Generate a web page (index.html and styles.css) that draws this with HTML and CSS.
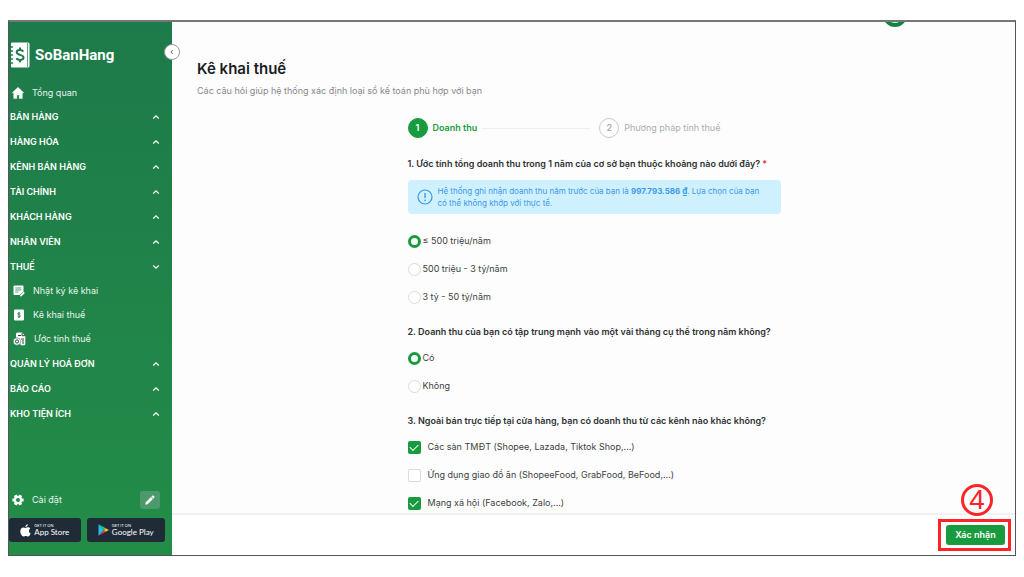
FILE: index.html
```html
<!DOCTYPE html>
<html lang="vi">
	<head>
		<meta charset="utf-8">
		<meta name="viewport" content="width=device-width, initial-scale=1">
		<title>Kê khai thuế</title>
		<link rel="stylesheet" href="styles.css">
	</head>
	<body>
		<svg class="defs" width="0" height="0" aria-hidden="true">
			<symbol id="chevron" viewBox="0 0 8 8"><path d="M1.5 5.2L4 2.8l2.500 2.400" fill="none" stroke="currentColor" stroke-width="1.2" stroke-linecap="round"/></symbol>
		</svg>
		<div class="frame">
			<aside class="sidebar">
				<button class="collapse" type="button" aria-label="Thu gọn">
					<svg width="6" height="6" viewBox="0 0 6 6"><path d="M3.8 1L1.9 3l1.9 2" fill="none" stroke="currentColor"/></svg>
				</button>
				<div class="brand">
					<svg width="20" height="26" viewBox="0 0 20 26">
						<path d="M1 1.5Q1 .5 2 .5H18Q19.500 .5 19.500 2V24Q19.500 25.500 18 25.500H2Q1 25.500 1 24.500Z" fill="#fff"/>
						<path d="M0 5h2.500M0 9h2.500M0 13h2.500M0 17h2.500M0 21h2.500" stroke="#1d7a4a" stroke-width="1.500" stroke-linecap="round"/>
						<path d="M17.500 1v24" stroke="#1d7a4a" stroke-width=".7"/>
						<path d="M13.300 9.600C12.500 7.800 6.700 7.200 6.700 10.300c0 3.300 6.800 1.900 6.800 5.300 0 3.100-6.100 2.800-7 .6M10 5.500v2.200M10 18v2.300" fill="none" stroke="#1d7a4a" stroke-width="2"/>
					</svg>
					<span>SoBanHang</span>
				</div>
				<nav class="menu">
					<a class="menu-item home" href="#">
						<svg width="12" height="12" viewBox="0 0 12 12"><path d="M6 .3L.2 5.800h1.500V11.500h3.100V8h2.400v3.500h3.100V5.800h1.500Z" fill="#fff" stroke="#fff" stroke-width=".4" stroke-linejoin="round"/></svg>
						Tổng quan
					</a>
					<button class="menu-head" type="button">BÁN HÀNG<svg><use href="#chevron"/></svg></button>
					<button class="menu-head" type="button">HÀNG HÓA<svg><use href="#chevron"/></svg></button>
					<button class="menu-head" type="button">KÊNH BÁN HÀNG<svg><use href="#chevron"/></svg></button>
					<button class="menu-head" type="button">TÀI CHÍNH<svg><use href="#chevron"/></svg></button>
					<button class="menu-head" type="button">KHÁCH HÀNG<svg><use href="#chevron"/></svg></button>
					<button class="menu-head" type="button">NHÂN VIÊN<svg><use href="#chevron"/></svg></button>
					<button class="menu-head open" type="button">THUẾ<svg><use href="#chevron"/></svg></button>
					<a class="menu-item" href="#">
						<svg width="12" height="12" viewBox="0 0 12 12">
							<path d="M1.500 0.500h8q1 0 1 1v5L6.500 10h-5q-1 0-1-1V1.500q0-1 1-1Z" fill="#fff"/>
							<path d="M2.300 3h6M2.300 5h6M2.300 7h3" stroke="#217f49" stroke-width=".8"/>
							<path d="M7 11.500l.3-1.600L10.600 6.800l1.200 1.200-3.300 3.200Z" fill="#fff"/>
						</svg>
						Nhật ký kê khai
					</a>
					<a class="menu-item" href="#">
						<svg width="12" height="12" viewBox="0 0 12 12">
							<rect x="1" y=".5" width="10" height="11" rx="1.200" fill="#fff"/>
							<path d="M7.400 4.700C7 3.600 4.600 3.700 4.700 4.900c.1 1.300 2.800.8 2.700 2.200-.1 1.300-2.400 1.200-2.800.2M6 3v6" fill="none" stroke="#217f49" stroke-width=".9"/>
						</svg>
						Kê khai thuế
					</a>
					<a class="menu-item" href="#">
						<svg width="13" height="14" viewBox="0 0 13 14">
							<path d="M3 5V2q0-1.500 1.500-1.500H9L12.300 4V12q0 1.300-1.300 1.300H8" fill="#fff"/>
							<path d="M5 3.500h3M9 1v2.700h3M8 7h3M9 9h2M9 11h2" fill="none" stroke="#34424a"/>
							<circle cx="4" cy="9.500" r="3.700" fill="#fff" stroke="#217f49" stroke-width=".6"/>
							<circle cx="4" cy="9.500" r="1.600" fill="none" stroke="#34424a"/>
						</svg>
						Ước tính thuế
					</a>
					<button class="menu-head" type="button">QUẢN LÝ HOÁ ĐƠN<svg><use href="#chevron"/></svg></button>
					<button class="menu-head" type="button">BÁO CÁO<svg><use href="#chevron"/></svg></button>
					<button class="menu-head" type="button">KHO TIỆN ÍCH<svg><use href="#chevron"/></svg></button>
				</nav>
				<div class="settings">
					<a class="menu-item home" href="#">
						<svg width="12" height="12" viewBox="0 0 12 12">
							<circle cx="6" cy="6" r="4.300" fill="#fff"/>
							<path d="M3.200 1.300L8.800 10.700M8.800 1.300L3.200 10.700M.4 6h11.200" stroke="#fff" stroke-width="3.200"/>
							<circle cx="6" cy="6" r="2" fill="#228a48"/>
						</svg>
						Cài đặt
					</a>
					<button class="edit" type="button" aria-label="Chỉnh sửa">
						<svg width="10" height="10" viewBox="0 0 10 10"><path d="M.5 9.500l.4-2.200L6 2.200 7.800 4 2.700 9.100ZM6.600 1.600l.8-.8q.5-.4 1 0l.8.8q.4.5 0 1l-.8.8Z" fill="#fff" stroke="#fff" stroke-width=".3"/></svg>
					</button>
				</div>
				<div class="stores">
					<a class="store" href="#">
						<svg width="11" height="13" viewBox="0 0 11 13"><path d="M7.800.3c.1 1.300-1 2.700-2.400 2.800C5.200 1.800 6.500.4 7.800.3ZM5.600 3.900c.7 0 1.400-.7 2.500-.6.900 0 1.700.4 2.200 1.200-2 1.200-1.700 4 .4 4.800C10.200 10.700 9.200 12.500 8 12.500c-.9 0-1.200-.5-2.200-.5s-1.400.5-2.200.5C2 12.500.3 9.600.3 7.300.3 4.800 1.800 3.400 3.300 3.400c1 0 1.700.5 2.300.5Z" fill="#fff"/></svg>
						<span class="store-text"><small>GET IT ON</small>App Store</span>
					</a>
					<a class="store" href="#">
						<svg width="11" height="12" viewBox="0 0 11 12">
							<path d="M.5.300L6 6 .5 11.700Z" fill="#1fc0f0"/>
							<path d="M.5.300L7.800 4.200 6 6Z" fill="#22cf72"/>
							<path d="M.5 11.700L7.800 7.800 6 6Z" fill="#f0384c"/>
							<path d="M7.800 4.200L10.900 6 7.800 7.800 6 6Z" fill="#fcc419"/>
						</svg>
						<span class="store-text"><small>GET IT ON</small>Google Play</span>
					</a>
				</div>
			</aside>

			<main class="main">
				<span class="avatar"></span>
				<div class="content">
					<h1>Kê khai thuế</h1>
					<p class="lead">Các câu hỏi giúp hệ thống xác định loại sổ kế toán phù hợp với bạn</p>

					<form class="form" id="tax-form">
						<ol class="steps">
							<li class="step active"><span class="num">1</span>Doanh thu</li>
							<li class="line"></li>
							<li class="step"><span class="num">2</span>Phương pháp tính thuế</li>
						</ol>

						<fieldset>
							<legend>1. Ước tính tổng doanh thu trong 1 năm của cơ sở bạn thuộc khoảng nào dưới đây? <span class="required">*</span></legend>
							<div class="notice">
								<svg width="16" height="16" viewBox="0 0 16 16"><circle cx="8" cy="8" r="7" fill="none" stroke="#3b97ec" stroke-width="1.200"/><path d="M8 4v5" stroke="#3b97ec" stroke-width="1.400"/><circle cx="8" cy="11.300" r=".9" fill="#3b97ec"/></svg>
								<p>Hệ thống ghi nhận doanh thu năm trước của bạn là <b>997.793.586 ₫</b>. Lựa chọn của bạn có thể không khớp với thực tế.</p>
							</div>
							<label class="option"><input type="radio" name="revenue" checked>≤ 500 triệu/năm</label>
							<label class="option"><input type="radio" name="revenue">500 triệu - 3 tỷ/năm</label>
							<label class="option"><input type="radio" name="revenue">3 tỷ - 50 tỷ/năm</label>
						</fieldset>

						<fieldset>
							<legend>2. Doanh thu của bạn có tập trung mạnh vào một vài tháng cụ thể trong năm không?</legend>
							<label class="option"><input type="radio" name="season" checked>Có</label>
							<label class="option"><input type="radio" name="season">Không</label>
						</fieldset>

						<fieldset>
							<legend>3. Ngoài bán trực tiếp tại cửa hàng, bạn có doanh thu từ các kênh nào khác không?</legend>
							<label class="option check"><input type="checkbox" checked>Các sàn TMĐT (Shopee, Lazada, Tiktok Shop,...)</label>
							<label class="option check"><input type="checkbox">Ứng dụng giao đồ ăn (ShopeeFood, GrabFood, BeFood,...)</label>
							<label class="option check"><input type="checkbox" checked>Mạng xã hội (Facebook, Zalo,...)</label>
						</fieldset>
					</form>
				</div>
				<footer class="footer">
					<div class="highlight">
						<span class="marker">4</span>
						<button class="submit" type="submit" form="tax-form">Xác nhận</button>
					</div>
				</footer>
			</main>
		</div>
	</body>
</html>
```
FILE: styles.css
```css
* {
	box-sizing: border-box;
}

body {
	margin: 0;
	padding: 20px 8px 21px;
	background: #fff;
	color: #3c3f42;
	font-family: Inter, "Noto Sans", sans-serif;
	font-size: 9px;
	line-height: 12px;
}

button, input {
	font: inherit;
	margin: 0;
}

button {
	padding: 0;
	border: 0;
	background: none;
	cursor: pointer;
}

a {
	color: inherit;
	text-decoration: none;
}

svg {
	flex: none;
}

.defs {
	position: absolute;
}

.frame {
	display: flex;
	height: calc(100vh - 41px);
	border: 1px solid #555;
	border-top: 2px solid #777;
}

/* Sidebar */

.sidebar {
	position: relative;
	display: flex;
	flex-direction: column;
	flex: none;
	width: 163px;
	background: linear-gradient(#1d7a4a, #238d48);
	color: #fff;
}

.collapse {
	position: absolute;
	top: 22px;
	right: -8px;
	z-index: 1;
	display: flex;
	align-items: center;
	justify-content: center;
	width: 16px;
	height: 16px;
	border: 1px solid #999;
	border-radius: 50%;
	background: #fff;
	color: #666;
}

.brand {
	display: flex;
	align-items: center;
	gap: 5px;
	padding: 20px 0 14px 1px;
	font-family: Roboto, sans-serif;
	font-size: 15px;
	font-weight: 700;
	line-height: 26px;
}

.menu-item {
	display: flex;
	align-items: center;
	gap: 8px;
	height: 24px;
	padding-left: 4px;
	color: #e9f5ee;
}

.home {
	height: 22px;
	padding-left: 3px;
}

.menu-head {
	display: flex;
	align-items: center;
	justify-content: space-between;
	width: 100%;
	height: 25px;
	padding: 0 12px 0 1px;
	color: #fff;
	font-weight: 600;
}

.menu-head svg {
	width: 8px;
	height: 8px;
}

.open svg {
	transform: rotate(180deg);
}

.settings {
	display: flex;
	align-items: center;
	justify-content: space-between;
	margin-top: auto;
	padding-right: 12px;
}

.edit {
	display: flex;
	align-items: center;
	justify-content: center;
	width: 20px;
	height: 18px;
	border-radius: 3px;
	background: #4c9a6b;
}

.stores {
	display: flex;
	gap: 6px;
	padding: 7px 7px 13px 0;
}

.store {
	display: flex;
	flex: 1 1 auto;
	align-items: center;
	justify-content: center;
	gap: 3px;
	height: 24px;
	border-radius: 3px;
	background: #1f2b37;
	font-family: Lato, sans-serif;
	font-size: 8px;
	line-height: 9px;
	white-space: nowrap;
}

.store-text small {
	display: block;
	font-size: 4px;
	line-height: 5px;
}

/* Main */

.main {
	position: relative;
	display: flex;
	flex-direction: column;
	flex: 1;
	min-width: 0;
	overflow: hidden;
	background: #fdfdfd;
}

.avatar {
	position: absolute;
	top: -19px;
	right: 108px;
	width: 24px;
	height: 24px;
	border: 4px solid #128542;
	border-radius: 50%;
	background: #dcefe3;
}

.content {
	flex: 1;
	min-height: 0;
	padding: 37px 24px 0 25px;
	overflow: hidden;
}

h1 {
	margin: 0 0 6px;
	color: #1b1d1f;
	font-size: 15px;
	font-weight: 600;
	line-height: 20px;
}

.lead {
	margin: 0;
	color: #84888c;
}

.form {
	max-width: 373px;
	margin: 21px auto 0;
}

.steps {
	display: flex;
	align-items: center;
	margin: 0 0 20px;
	padding: 0;
	list-style: none;
}

.step {
	display: flex;
	align-items: center;
	gap: 5px;
	color: #aaadb0;
}

.num {
	display: flex;
	align-items: center;
	justify-content: center;
	width: 20px;
	height: 20px;
	border: 1px solid #c8cacc;
	border-radius: 50%;
	font-weight: 600;
}

.active {
	color: #189b3e;
	font-weight: 600;
}

.active .num {
	border-color: #189b3e;
	background: #189b3e;
	color: #fff;
}

.line {
	width: 108px;
	height: 1px;
	margin: 0 9px 0 5px;
	background: #eee;
}

fieldset {
	min-width: 0;
	margin: 0 0 15px;
	padding: 0;
	border: 0;
}

legend {
	padding: 0 0 6px;
	color: #2e3133;
	font-weight: 600;
	white-space: nowrap;
}

.required {
	color: #e5343d;
}

.notice {
	display: flex;
	align-items: center;
	gap: 5px;
	margin: 4px 0 13px;
	padding: 5px 16px 5px 9px;
	border-radius: 4px;
	background: #cff1ff;
	color: #3b97ec;
	font-size: 8px;
}

.notice p {
	margin: 0;
}

.option {
	display: flex;
	align-items: center;
	gap: 2px;
	height: 28px;
}

.option input {
	appearance: none;
	flex: none;
	width: 13px;
	height: 13px;
	border: 1px solid #d9dbdd;
	border-radius: 50%;
	background: #fff;
}

.option input:checked {
	border: 3px solid #189b3e;
}

.check {
	gap: 7px;
}

.check input {
	border-radius: 2px;
}

.check input:checked {
	display: flex;
	align-items: center;
	justify-content: center;
	border: 0;
	background: #189b3e;
}

.check input:checked::before {
	content: "";
	width: 7px;
	height: 4px;
	margin-bottom: 2px;
	border: solid #fff;
	border-width: 0 0 1px 1px;
	transform: rotate(-45deg);
}

.footer {
	display: flex;
	justify-content: flex-end;
	padding: 4px 4px 4px 0;
	border-top: 2px solid #f1f1f1;
	background: #fff;
}

.highlight {
	position: relative;
	padding: 3px 3px 3px 5px;
	border: 3px solid #fb2427;
}

.submit {
	display: block;
	width: 59px;
	height: 20px;
	border-radius: 3px;
	background: #189b3e;
	color: #fff;
	font-weight: 600;
}

.marker {
	position: absolute;
	right: 15px;
	bottom: 32px;
	display: flex;
	align-items: center;
	justify-content: center;
	width: 32px;
	height: 32px;
	border: 3px solid #fb2427;
	border-radius: 50%;
	color: #fb2427;
	font-family: "Liberation Sans", sans-serif;
	font-size: 28px;
	line-height: 28px;
}
```
